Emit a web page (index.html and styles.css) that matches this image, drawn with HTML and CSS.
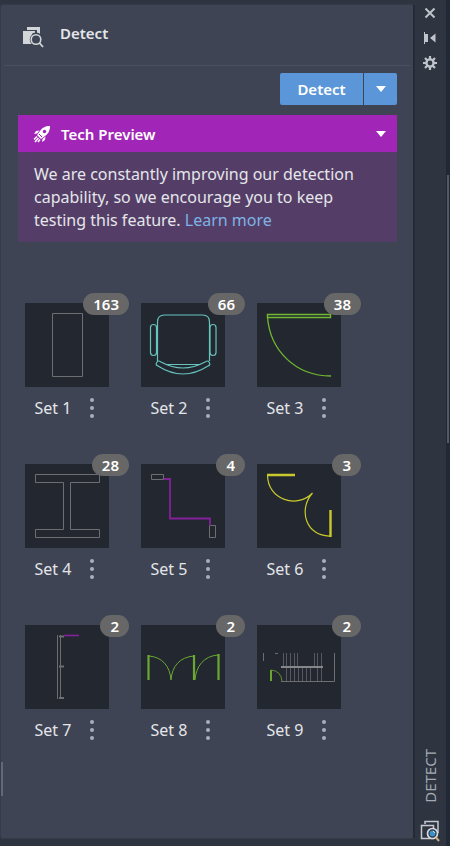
FILE: index.html
```
<!DOCTYPE html>
<html lang="en">
<head>
  <meta charset="UTF-8" />
  <meta name="viewport" content="width=device-width, initial-scale=1.0"/>
  <title>Detect</title>
  <link rel="stylesheet" href="styles.css">
</head>
<body>
  <main class="panel">
    <header class="panel-header">
      <svg class="panel-icon" width="22" height="22" viewBox="0 0 22 22" aria-hidden="true">
        <path d="M5 1h13v10h-3V4H5z" fill="#d3d6d8"/>
        <path d="M1 5h12v13H1z" fill="#d3d6d8"/>
        <circle cx="14" cy="13.500" r="7" fill="#3e4453"/>
        <path d="M1 5h9v13H1z" fill="#d3d6d8"/>
        <circle cx="14" cy="13.500" r="6.200" fill="#3e4453"/>
        <circle cx="14" cy="13.500" r="4.800" fill="#3e4453" stroke="#d3d6d8" stroke-width="1.600"/>
        <path d="M17.500 17l3.500 4" stroke="#d3d6d8" stroke-width="1.800"/>
      </svg>
      <h1>Detect</h1>
    </header>

    <div class="toolbar">
      <button type="button" class="btn btn-main">Detect</button>
      <button type="button" class="btn btn-drop" aria-label="Detect options">
        <svg width="10" height="6" viewBox="0 0 10 6"><path d="M0 0h10L5 6z" fill="#fff"/></svg>
      </button>
    </div>

    <section class="preview">
      <div class="preview-title">
        <svg width="18" height="18" viewBox="0 0 18 18" aria-hidden="true">
          <path d="M17 1C12 1 9 3 7 6L4 10l4 4 4-3c3-2 5-5 5-10z" fill="#fff"/>
          <circle cx="11.500" cy="6.500" r="1.700" fill="#a126b8"/>
          <path d="M6.500 5.500L3 6 1 9l3-.5zM12.500 11.500L12 15l-3 2 .5-3z" fill="#fff"/>
          <path d="M4 11.500L1 14.500M5.500 13L2 17M7 14.500L5 17" stroke="#fff" stroke-width="1.500"/>
          <path d="M6 9l3 3" stroke="#a126b8" stroke-width="1"/>
        </svg>
        <h2>Tech Preview</h2>
        <button type="button" class="preview-toggle" aria-label="Collapse">
          <svg width="10" height="6" viewBox="0 0 10 6"><path d="M0 0h10L5 6z" fill="#fff"/></svg>
        </button>
      </div>
      <p>We are constantly improving our detection capability, so we encourage you to keep testing this feature. <a href="#">Learn more</a></p>
    </section>

    <div class="sets">
      <div class="set">
        <div class="thumb">
          <svg viewBox="0 0 84 84" stroke="#6c6e72"><path d="M27.500 10.500h30v63h-30z"/></svg>
          <span class="badge">163</span>
        </div>
        <div class="set-label"><span>Set 1</span><button type="button" class="more" aria-label="Set 1 menu"><i></i><i></i><i></i></button></div>
      </div>

      <div class="set">
        <div class="thumb">
          <svg viewBox="0 0 84 84" stroke="#66c4bd" stroke-width="1.200">
            <path d="M16.500 58V19q0-7 7-7h38q7 0 7 7v39"/>
            <rect x="9.500" y="21.500" width="6" height="31" rx="3"/>
            <rect x="69" y="21.500" width="6" height="31" rx="3"/>
            <path d="M16 59q-2 3 1 4 25 16 50 0 3-1 1-4-1-2-4 0-22 12-44 0-3-2-4 0z"/>
            <path d="M25 61.500h34"/>
          </svg>
          <span class="badge">66</span>
        </div>
        <div class="set-label"><span>Set 2</span><button type="button" class="more" aria-label="Set 2 menu"><i></i><i></i><i></i></button></div>
      </div>

      <div class="set">
        <div class="thumb">
          <svg viewBox="0 0 84 84" stroke="#72b830">
            <path d="M10.500 11.500h63v3h-63z" stroke-width="1.400"/>
            <path d="M10.500 14C13 47 38 73 74 73" stroke-width="1.300"/>
          </svg>
          <span class="badge">38</span>
        </div>
        <div class="set-label"><span>Set 3</span><button type="button" class="more" aria-label="Set 3 menu"><i></i><i></i><i></i></button></div>
      </div>

      <div class="set">
        <div class="thumb">
          <svg viewBox="0 0 84 84" stroke="#6c6e72"><path d="M10.500 10.500h64v8h-29v47h29v8h-64v-8h28v-47h-28z"/></svg>
          <span class="badge">28</span>
        </div>
        <div class="set-label"><span>Set 4</span><button type="button" class="more" aria-label="Set 4 menu"><i></i><i></i><i></i></button></div>
      </div>

      <div class="set">
        <div class="thumb">
          <svg viewBox="0 0 84 84" stroke="#6c6e72">
            <path d="M10.500 10.500h12v5h-12zM68.500 61.500h6v12h-6z"/>
            <path d="M23 15h6v39.500h40v7" stroke="#84209a" stroke-width="1.800"/>
          </svg>
          <span class="badge">4</span>
        </div>
        <div class="set-label"><span>Set 5</span><button type="button" class="more" aria-label="Set 5 menu"><i></i><i></i><i></i></button></div>
      </div>

      <div class="set">
        <div class="thumb">
          <svg viewBox="0 0 84 84" stroke="#c9c92c">
            <path d="M10 11h28M73.500 46v27" stroke-width="2.400"/>
            <path d="M10.500 11c0 25 30 34 45 18-15 17-6 44 18 43" stroke-width="1.200"/>
          </svg>
          <span class="badge">3</span>
        </div>
        <div class="set-label"><span>Set 6</span><button type="button" class="more" aria-label="Set 6 menu"><i></i><i></i><i></i></button></div>
      </div>

      <div class="set">
        <div class="thumb">
          <svg viewBox="0 0 84 84" stroke="#6c6e72">
            <path d="M32.500 10v64M35.500 10v64"/>
            <path d="M34 11.500h5M34 41.500h5M34 73h5" stroke-width="2"/>
            <path d="M39 10.500h15" stroke="#84209a" stroke-width="1.600"/>
          </svg>
          <span class="badge">2</span>
        </div>
        <div class="set-label"><span>Set 7</span><button type="button" class="more" aria-label="Set 7 menu"><i></i><i></i><i></i></button></div>
      </div>

      <div class="set">
        <div class="thumb">
          <svg viewBox="0 0 84 84" stroke="#6aa832">
            <path d="M7.500 30v25M53 30v25M77.500 29v26" stroke-width="2.200"/>
            <path d="M8 31c13 1 21 10 22 24 1-14 9-23 23-24M54 55c1-14 9-24 23-25"/>
          </svg>
          <span class="badge">2</span>
        </div>
        <div class="set-label"><span>Set 8</span><button type="button" class="more" aria-label="Set 8 menu"><i></i><i></i><i></i></button></div>
      </div>

      <div class="set">
        <div class="thumb">
          <svg viewBox="0 0 84 84" stroke="#6c6e72">
            <path d="M6.500 28v8M18 28.500h3M77.500 28v28.500H24"/>
            <path d="M26.500 28v13M29.500 28v28M33.500 28v28M37.500 28v28M40.500 28v13M57.500 28v13M60.500 28v28M64.500 28v28M41.500 43v13M45.500 43v13M49.500 43v13M53.500 43v13" stroke="#55585e"/>
            <path d="M24 42h42" stroke="#85878b" stroke-width="1.800"/>
            <path d="M14 56V45" stroke="#6fb72e" stroke-width="1.800"/>
            <path d="M14 45q10 1 11 11" stroke="#5e942f"/>
          </svg>
          <span class="badge">2</span>
        </div>
        <div class="set-label"><span>Set 9</span><button type="button" class="more" aria-label="Set 9 menu"><i></i><i></i><i></i></button></div>
      </div>
    </div>
    <span class="grip"></span>
  </main>

  <aside class="rail">
    <div class="rail-tools">
      <button type="button" aria-label="Close">
        <svg width="14" height="14" viewBox="0 0 14 14"><path d="M2.500 2.500l9 9M11.500 2.500l-9 9" stroke="#bfc3ca" stroke-width="2"/></svg>
      </button>
      <button type="button" aria-label="Auto-hide">
        <svg width="14" height="14" viewBox="0 0 14 14"><path d="M1.500 1v12" stroke="#bfc3ca"/><path d="M2 3h3v8H2zM12.500 2.500v9L7 7z" fill="#bfc3ca"/></svg>
      </button>
      <button type="button" aria-label="Properties">
        <svg width="14" height="14" viewBox="0 0 14 14" fill="none" stroke="#bfc3ca">
          <circle cx="7" cy="7" r="3.600" stroke-width="2.400"/>
          <path d="M7 0v3M7 11v3M0 7h3M11 7h3M2 2l2.200 2.200M9.800 9.800L12 12M12 2L9.800 4.200M4.200 9.800L2 12" stroke-width="2.200"/>
        </svg>
      </button>
    </div>
    <div class="rail-title">
      <span>DETECT</span>
      <svg width="20" height="22" viewBox="0 0 20 22" fill="none" aria-hidden="true">
        <path d="M5 4V1.500h13V13M1.500 5.500h12v13h-12z" stroke="#c6cad0" stroke-width="1.500"/>
        <circle cx="12.500" cy="13.500" r="5" fill="#2b3240" stroke="#d5d9de" stroke-width="1.700"/>
        <circle cx="12.500" cy="13.500" r="3" fill="#3d91c9"/>
        <path d="M13 11l2 2" stroke="#c5e3f5"/>
        <path d="M16 17.500l3 3.500" stroke="#c9b083" stroke-width="2"/>
      </svg>
    </div>
    <span class="scroll-thumb"></span>
  </aside>
</body>
</html>
```
FILE: styles.css
```
* {
  margin: 0;
  padding: 0;
  box-sizing: border-box;
}

body {
  display: flex;
  min-height: 100vh;
  background-color: #2e3440;
  color: #e4e6ea;
  font-family: "Noto Sans", "Open Sans", sans-serif;
  font-size: 16px;
}

button {
  border: none;
  background: none;
  color: inherit;
  font: inherit;
  cursor: pointer;
}

svg {
  display: block;
}

.panel {
  position: relative;
  flex: 1;
  margin: 4px 0 7px;
  background-color: #3e4453;
  border: 1px solid #353b48;
  border-right: 2px solid #252b36;
  border-radius: 3px;
}

.panel-header {
  display: flex;
  align-items: center;
  gap: 16px;
  height: 61px;
  margin: 0 3px;
  padding: 0 18px;
  border-bottom: 1px solid #4a5060;
}

.panel-icon {
  margin-top: 4px;
}

h1 {
  padding-bottom: 4px;
  font-size: 15px;
  font-weight: 600;
  line-height: 24px;
}

.toolbar {
  display: flex;
  justify-content: flex-end;
  gap: 1px;
  margin: 7px 16px 10px;
}

.btn {
  height: 32px;
  background-color: #5b97d8;
  color: #fff;
}

.btn-main {
  width: 83px;
  border-radius: 2px 0 0 2px;
  font-size: 15px;
  font-weight: 600;
}

.btn-drop {
  display: flex;
  align-items: center;
  justify-content: center;
  width: 33px;
  border-radius: 0 2px 2px 0;
}

.preview {
  margin: 0 16px 0 17px;
  background-color: #543e67;
}

.preview-title {
  display: flex;
  align-items: center;
  gap: 10px;
  height: 37px;
  padding: 0 11px 0 15px;
  background-color: #a126b8;
  color: #fff;
}

h2 {
  flex: 1;
  font-size: 15px;
  font-weight: 600;
}

.preview p {
  padding: 11px 16px 10px;
  line-height: 23px;
}

.preview a {
  color: #7fb2e5;
  text-decoration: none;
}

.sets {
  display: grid;
  grid-template-columns: repeat(auto-fill, 84px);
  gap: 44px 32px;
  padding: 61px 24px 0;
}

.thumb {
  position: relative;
  height: 84px;
  background-color: #232830;
}

.thumb svg {
  width: 84px;
  height: 84px;
  fill: none;
}

.badge {
  position: absolute;
  top: -10px;
  right: -20px;
  height: 22px;
  padding: 0 10px;
  border-radius: 11px;
  background-color: #666766;
  color: #fff;
  font-size: 15px;
  font-weight: 600;
  line-height: 22px;
}

.set-label {
  display: flex;
  margin-top: 9px;
  line-height: 24px;
}

.set-label span {
  width: 56px;
  text-align: center;
}

.more {
  display: flex;
  flex-direction: column;
  align-items: center;
  justify-content: center;
  gap: 4px;
  width: 21px;
  height: 24px;
}

.more i {
  width: 4px;
  height: 4px;
  border-radius: 50%;
  background-color: #a9afbd;
}

.grip {
  position: absolute;
  left: 0;
  bottom: 42px;
  width: 2px;
  height: 34px;
  background-color: #626876;
}

.rail {
  position: relative;
  display: flex;
  flex-direction: column;
  justify-content: space-between;
  align-items: center;
  width: 35px;
  padding: 6px 1px 4px 0;
  border-right: 4px solid #202935;
}

.rail-tools {
  display: flex;
  flex-direction: column;
  gap: 11px;
}

.rail-title {
  display: flex;
  flex-direction: column;
  align-items: center;
  gap: 17px;
  color: #a4aab4;
  font-size: 15px;
}

.rail-title span {
  writing-mode: vertical-rl;
  transform: rotate(180deg);
  line-height: 20px;
}

.scroll-thumb {
  position: absolute;
  top: 175px;
  right: -3px;
  width: 2px;
  height: 268px;
  background-color: #535965;
}
```
